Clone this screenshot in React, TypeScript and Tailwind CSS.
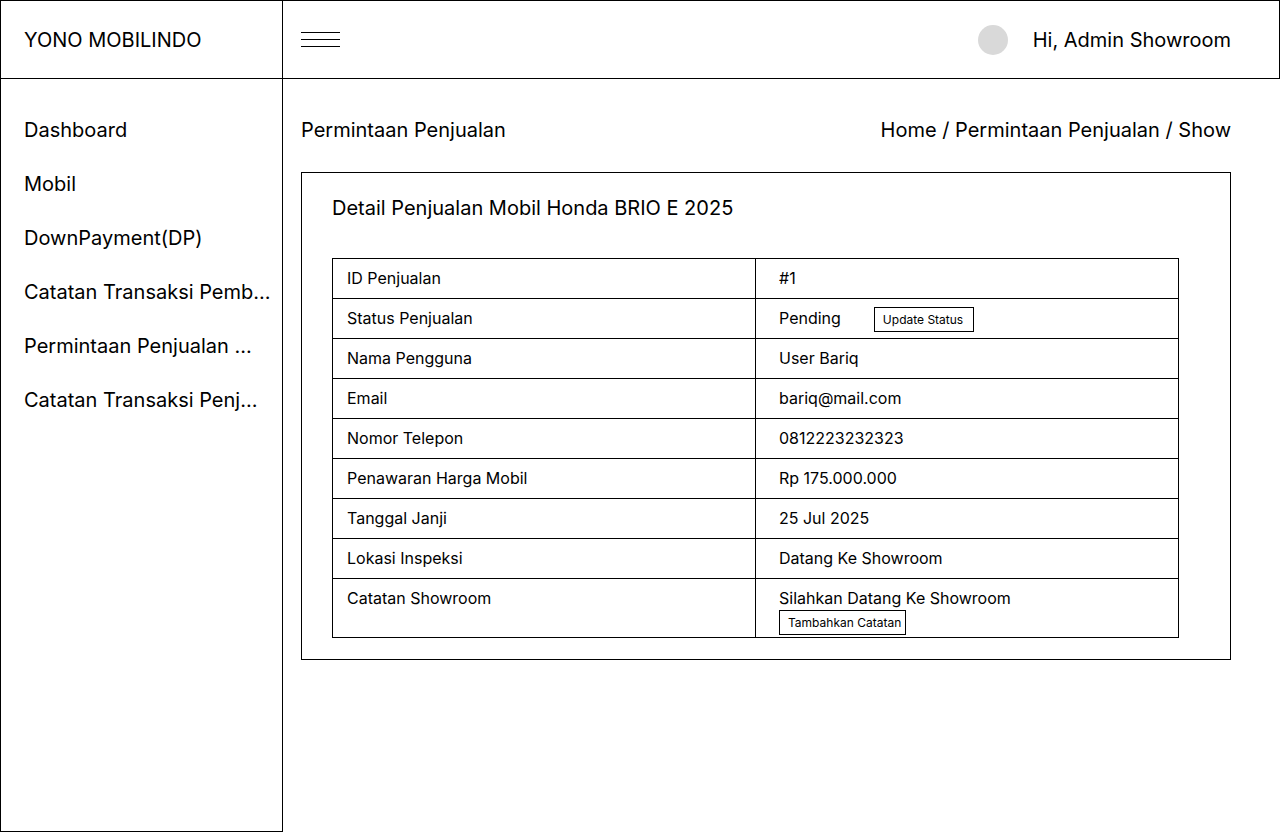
import React from "react";

const menu = [
  "Dashboard",
  "Mobil",
  "DownPayment(DP)",
  "Catatan Transaksi Pemb...",
  "Permintaan Penjualan ...",
  "Catatan Transaksi Penj...",
];

const rows = [
  { label: "ID Penjualan", value: "#1" },
  { label: "Status Penjualan", value: "Pending", action: "Update Status" },
  { label: "Nama Pengguna", value: "User Bariq" },
  { label: "Email", value: "bariq@mail.com" },
  { label: "Nomor Telepon", value: "0812223232323" },
  { label: "Penawaran Harga Mobil", value: "Rp 175.000.000" },
  { label: "Tanggal Janji", value: "25 Jul 2025" },
  { label: "Lokasi Inspeksi", value: "Datang Ke Showroom" },
];

function SmallButton({ padding, children }: { padding: string; children: React.ReactNode }) {
  return (
    <button
      type="button"
      className={`block h-[25px] whitespace-nowrap border border-black bg-white text-left text-xs ${padding}`}
    >
      {children}
    </button>
  );
}

export default function App() {
  return (
    <div className="flex min-h-screen bg-white font-['Inter',sans-serif] text-xl leading-6 text-black">
      <aside className="flex w-[283px] shrink-0 flex-col border border-black">
        <div className="flex h-[78px] items-center border-b border-black pl-[23px]">YONO MOBILINDO</div>
        <nav aria-label="Menu" className="pt-[39px]">
          <ul className="flex flex-col gap-[30px] pl-[23px]">
            {menu.map((item) => (
              <li key={item} className="whitespace-nowrap">
                <a href="#">{item}</a>
              </li>
            ))}
          </ul>
        </nav>
      </aside>
      <div className="flex min-w-0 flex-1 flex-col">
        <header className="flex h-[79px] items-center justify-between border-y border-r border-black pl-[18px] pr-12">
          <button type="button" aria-label="Menu" className="flex w-[39px] flex-col gap-[6px]">
            <span className="h-px w-full bg-black" />
            <span className="h-px w-full bg-black" />
            <span className="h-px w-full bg-black" />
          </button>
          <div className="flex items-center gap-[25px]">
            <span className="size-[30px] rounded-full bg-[#d9d9d9]" />
            <span>Hi, Admin Showroom</span>
          </div>
        </header>
        <main className="pl-[18px] pr-[49px] pt-[39px]">
          <div className="flex justify-between">
            <h1>Permintaan Penjualan</h1>
            <nav aria-label="Breadcrumb">
              <a href="#">Home</a> / <a href="#">Permintaan Penjualan</a> / <span>Show</span>
            </nav>
          </div>
          <section className="mt-[30px] border border-black pb-[21px] pl-[30px] pr-[51px] pt-[23px]">
            <h2>Detail Penjualan Mobil Honda BRIO E 2025</h2>
            <table className="mt-[38px] w-full table-fixed border-collapse text-base leading-[22px]">
              <tbody>
                {rows.map((row) => (
                  <tr key={row.label} className="h-10 align-top">
                    <th scope="row" className="border border-black p-0 pl-[14px] pt-2 text-left font-normal">
                      {row.label}
                    </th>
                    <td className="border border-black p-0 pl-[23px] pt-2">
                      <div className="flex items-start gap-[33px]">
                        {row.value}
                        {row.action && <SmallButton padding="pl-2 pr-[10px]">{row.action}</SmallButton>}
                      </div>
                    </td>
                  </tr>
                ))}
                <tr className="h-[59px] align-top">
                  <th scope="row" className="border border-black p-0 pl-[14px] pt-2 text-left font-normal">
                    Catatan Showroom
                  </th>
                  <td className="border border-black p-0 pl-[23px] pt-2">
                    Silahkan Datang Ke Showroom
                    <div className="pt-px">
                      <SmallButton padding="pl-2 pr-1">Tambahkan Catatan</SmallButton>
                    </div>
                  </td>
                </tr>
              </tbody>
            </table>
          </section>
        </main>
      </div>
    </div>
  );
}
